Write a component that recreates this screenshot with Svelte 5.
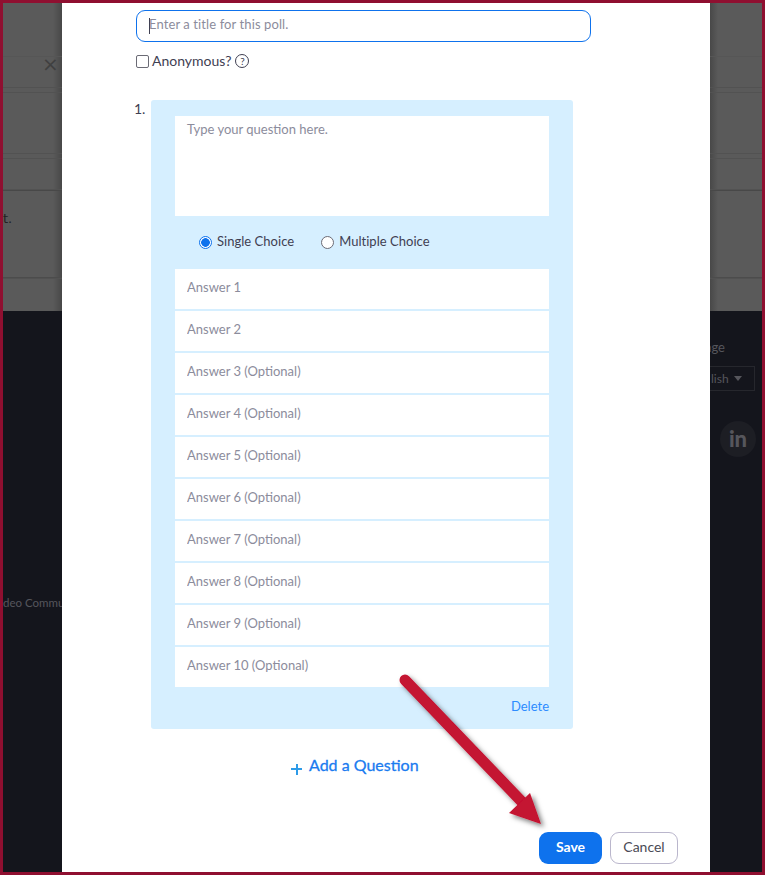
<script lang="ts">
  const answers = [
    "Answer 1", "Answer 2", "Answer 3 (Optional)", "Answer 4 (Optional)", "Answer 5 (Optional)",
    "Answer 6 (Optional)", "Answer 7 (Optional)", "Answer 8 (Optional)", "Answer 9 (Optional)", "Answer 10 (Optional)"
  ];
  let title = $state("");
  let anonymous = $state(false);
  let question = $state("");
  let kind = $state("single");
</script>

<div class="frame">
  <!-- dimmed page behind the modal -->
  <aside class="side left">
    <div class="dim-top">
      <div class="row first"></div>
      <div class="row close-row">×</div>
      <div class="row gap"></div>
      <div class="row tall"></div>
      <div class="row gap"></div>
      <div class="row mid"></div>
      <div class="row para">t.</div>
      <div class="row"></div>
    </div>
    <div class="dim-foot"><span class="foot-text">deo Commu</span></div>
  </aside>

  <main class="modal">
    <div class="title-wrap">
      <input class="title-input" placeholder="Enter a title for this poll." bind:value={title} />
      <i class="text-caret"></i>
    </div>
    <label class="anon">
      <input type="checkbox" bind:checked={anonymous} />
      <span>Anonymous?</span>
      <span class="help">?</span>
    </label>

    <div class="question">
      <span class="num">1.</span>
      <section class="card">
        <textarea placeholder="Type your question here." bind:value={question}></textarea>
        <div class="kinds">
          <label class="kind"><input type="radio" value="single" bind:group={kind} /><span>Single Choice</span></label>
          <label class="kind"><input type="radio" value="multiple" bind:group={kind} /><span>Multiple Choice</span></label>
        </div>
        <div class="answers">
          {#each answers as a}
            <input class="answer" placeholder={a} />
          {/each}
        </div>
        <div class="delete-row"><button class="link">Delete</button></div>
      </section>
    </div>

    <button class="add"><span class="plus"></span>Add a Question</button>

    <div class="actions">
      <button class="save">Save</button>
      <button class="cancel">Cancel</button>
    </div>
  </main>

  <aside class="side right">
    <div class="dim-top">
      <div class="row first"></div>
      <div class="row close-row"></div>
      <div class="row gap"></div>
      <div class="row tall"></div>
      <div class="row gap"></div>
      <div class="row mid"></div>
      <div class="row para"></div>
      <div class="row"></div>
    </div>
    <div class="dim-foot foot-right">
      <div class="lang">age</div>
      <div class="lang-box">lish <i class="caret"></i></div>
      <div class="linkedin">in</div>
    </div>
  </aside>

  <svg class="arrow" width="765" height="875" viewBox="0 0 765 875">
    <defs>
      <filter id="shadow" x="-20%" y="-20%" width="150%" height="150%">
        <feDropShadow dx="3" dy="3" stdDeviation="2.5" flood-color="#000" flood-opacity="0.5" />
      </filter>
    </defs>
    <g filter="url(#shadow)">
      <path d="M405 680 L524 804" stroke="#c41230" stroke-width="11" stroke-linecap="round" fill="none" />
      <path d="M530 793 L509 813 L541 824 Z" fill="#c41230" />
    </g>
  </svg>
</div>

<style>
  :global(body) {
    margin: 0;
    font-family: Lato, "Open Sans", sans-serif;
  }
  .frame {
    position: relative;
    box-sizing: border-box;
    width: 765px;
    height: 875px;
    border: 3px solid #8f0f30;
    display: grid;
    grid-template-columns: 59px 648px 52px;
    overflow: hidden;
  }
  .side {
    display: flex;
    flex-direction: column;
    min-width: 0;
    overflow: hidden;
    background: #14151c;
    color: #56565c;
  }
  .dim-top {
    height: 308px;
    background: #585858;
    flex: none;
  }
  .left .dim-top { background: linear-gradient(90deg, #5a5a5a 0 50px, #484848 59px); }
  .right .dim-top { background: linear-gradient(90deg, #484848 0, #5a5a5a 8px); }
  .row {
    box-sizing: border-box;
    border-bottom: 1px solid #525252;
  }
  .first { height: 54px; border-bottom-color: #565656; }
  .close-row {
    height: 31px;
    padding: 0 0 0 39px;
    font: 20px/14px "DejaVu Sans", sans-serif;
    color: #404040;
  }
  .gap { height: 5px; }
  .tall { height: 61px; }
  .mid { height: 31px; }
  .para {
    height: 88px;
    border-top: 1px solid #484848;
    border-bottom-color: #4c4c4c;
    font: 13px/16px "DejaVu Sans", sans-serif;
    color: #222;
    padding-top: 20px;
  }
  .dim-foot { flex: 1; }
  .foot-text {
    display: block;
    margin-top: 284px;
    font-size: 11.5px;
    line-height: 16px;
    white-space: nowrap;
  }
  .foot-right { padding-top: 28px; }
  .lang { font-size: 13px; line-height: 16px; margin-left: -5px; }
  .lang-box {
    box-sizing: border-box;
    width: 51px;
    height: 25px;
    margin: 11px 0 0 -6px;
    border: 1px solid #26272d;
    font-size: 12px;
    line-height: 23px;
    padding-left: 6px;
    white-space: nowrap;
  }
  .caret {
    display: inline-block;
    border: 4px solid transparent;
    border-top: 5px solid #56565c;
    border-bottom: 0;
    margin: 0 0 2px 2px;
  }
  .linkedin {
    width: 36px;
    height: 36px;
    margin: 30px 0 0 10px;
    border-radius: 50%;
    background: #1d1e24;
    font-weight: 900;
    font-size: 22px;
    line-height: 35px;
    text-align: center;
  }

  .modal {
    background: #fff;
    padding: 7px 0 0 74px;
    color: #3f4052;
    font-size: 14px;
    min-width: 0;
  }
  input, textarea, button { font-family: inherit; }
  ::placeholder { color: #8c8c9c; opacity: 1; }
  .title-wrap { position: relative; width: 455px; }
  .title-input {
    display: block;
    box-sizing: border-box;
    width: 455px;
    height: 32px;
    padding: 0 12px 5px;
    border: 1.5px solid #0e72ed;
    border-radius: 9px;
    font-size: 13px;
    letter-spacing: 0.1px;
    outline: 0;
  }
  .text-caret {
    position: absolute;
    left: 12.5px;
    top: 8px;
    width: 1px;
    height: 16px;
    background: #3f4052;
  }
  .anon {
    display: flex;
    align-items: center;
    height: 20px;
    margin-top: 8px;
    font-size: 14px;
  }
  .anon input {
    appearance: none;
    box-sizing: border-box;
    width: 13px;
    height: 13px;
    margin: 3px 3px 0 0;
    border: 1px solid #6b6b75;
    border-radius: 2px;
    background: #fff;
  }
  .help {
    box-sizing: border-box;
    width: 14px;
    height: 14px;
    margin: 2px 0 0 4px;
    border: 1px solid #3f4052;
    border-radius: 50%;
    font-size: 10px;
    line-height: 12px;
    text-align: center;
  }
  .question {
    display: flex;
    margin-top: 30px;
    margin-left: -2px;
  }
  .num { width: 17px; line-height: 18px; font-size: 14px; }
  .card {
    box-sizing: border-box;
    width: 422px;
    height: 629px;
    padding: 16px 24px 0;
    background: #d6efff;
    border-radius: 3px;
  }
  textarea {
    display: block;
    box-sizing: border-box;
    width: 374px;
    height: 100px;
    padding: 5px 12px;
    border: 0;
    font-size: 13px;
    line-height: 17px;
    resize: none;
    outline: 0;
  }
  .kinds {
    display: flex;
    align-items: center;
    gap: 27px;
    height: 53px;
    padding-left: 24px;
    font-size: 13px;
    letter-spacing: 0.03px;
  }
  .kind { display: flex; align-items: center; gap: 5px; }
  .kind span { position: relative; top: -2px; }
  .kind input {
    appearance: none;
    box-sizing: border-box;
    width: 13px;
    height: 13px;
    margin: 0;
    border: 1px solid #6b6b75;
    border-radius: 50%;
    background: #fff;
  }
  .kind input:checked {
    border-color: #0e72ed;
    background: radial-gradient(circle, #0e72ed 0 4px, #fff 4.6px);
  }
  .answers { display: grid; gap: 2px; }
  .answer {
    box-sizing: border-box;
    width: 374px;
    height: 40px;
    padding: 0 12px 5px;
    border: 0;
    font-size: 13px;
    outline: 0;
  }
  .delete-row { display: flex; justify-content: flex-end; padding-top: 11px; }
  .link {
    padding: 0;
    border: 0;
    background: none;
    color: #2d8cff;
    font-size: 13px;
    line-height: 16px;
  }
  .add {
    display: flex;
    align-items: center;
    margin: 25px 0 0 155px;
    padding: 0;
    border: 0;
    background: none;
    color: #1a7bf0;
    font-size: 16px;
    font-weight: 400;
    -webkit-text-stroke: 0.3px #1a7bf0;
    line-height: 22px;
  }
  .plus {
    width: 11px;
    height: 11px;
    margin: 8px 7px 0 0;
    background:
      linear-gradient(#2d9be8, #2d9be8) center / 100% 2px no-repeat,
      linear-gradient(#2d9be8, #2d9be8) center / 2px 100% no-repeat;
  }
  .actions {
    display: flex;
    gap: 8px;
    margin: 56px 0 0 403px;
  }
  .actions button {
    box-sizing: border-box;
    height: 32px;
    padding: 0 0 4px;
    border-radius: 9px;
    font-size: 14px;
  }
  .save {
    width: 63px;
    border: 0;
    background: #0e72ed;
    color: #fff;
    font-weight: 700;
  }
  .cancel {
    width: 68px;
    border: 1px solid #bab6cc;
    background: #fff;
    color: #4a4a55;
  }
  .arrow {
    position: absolute;
    left: -3px;
    top: -3px;
    pointer-events: none;
  }
</style>
